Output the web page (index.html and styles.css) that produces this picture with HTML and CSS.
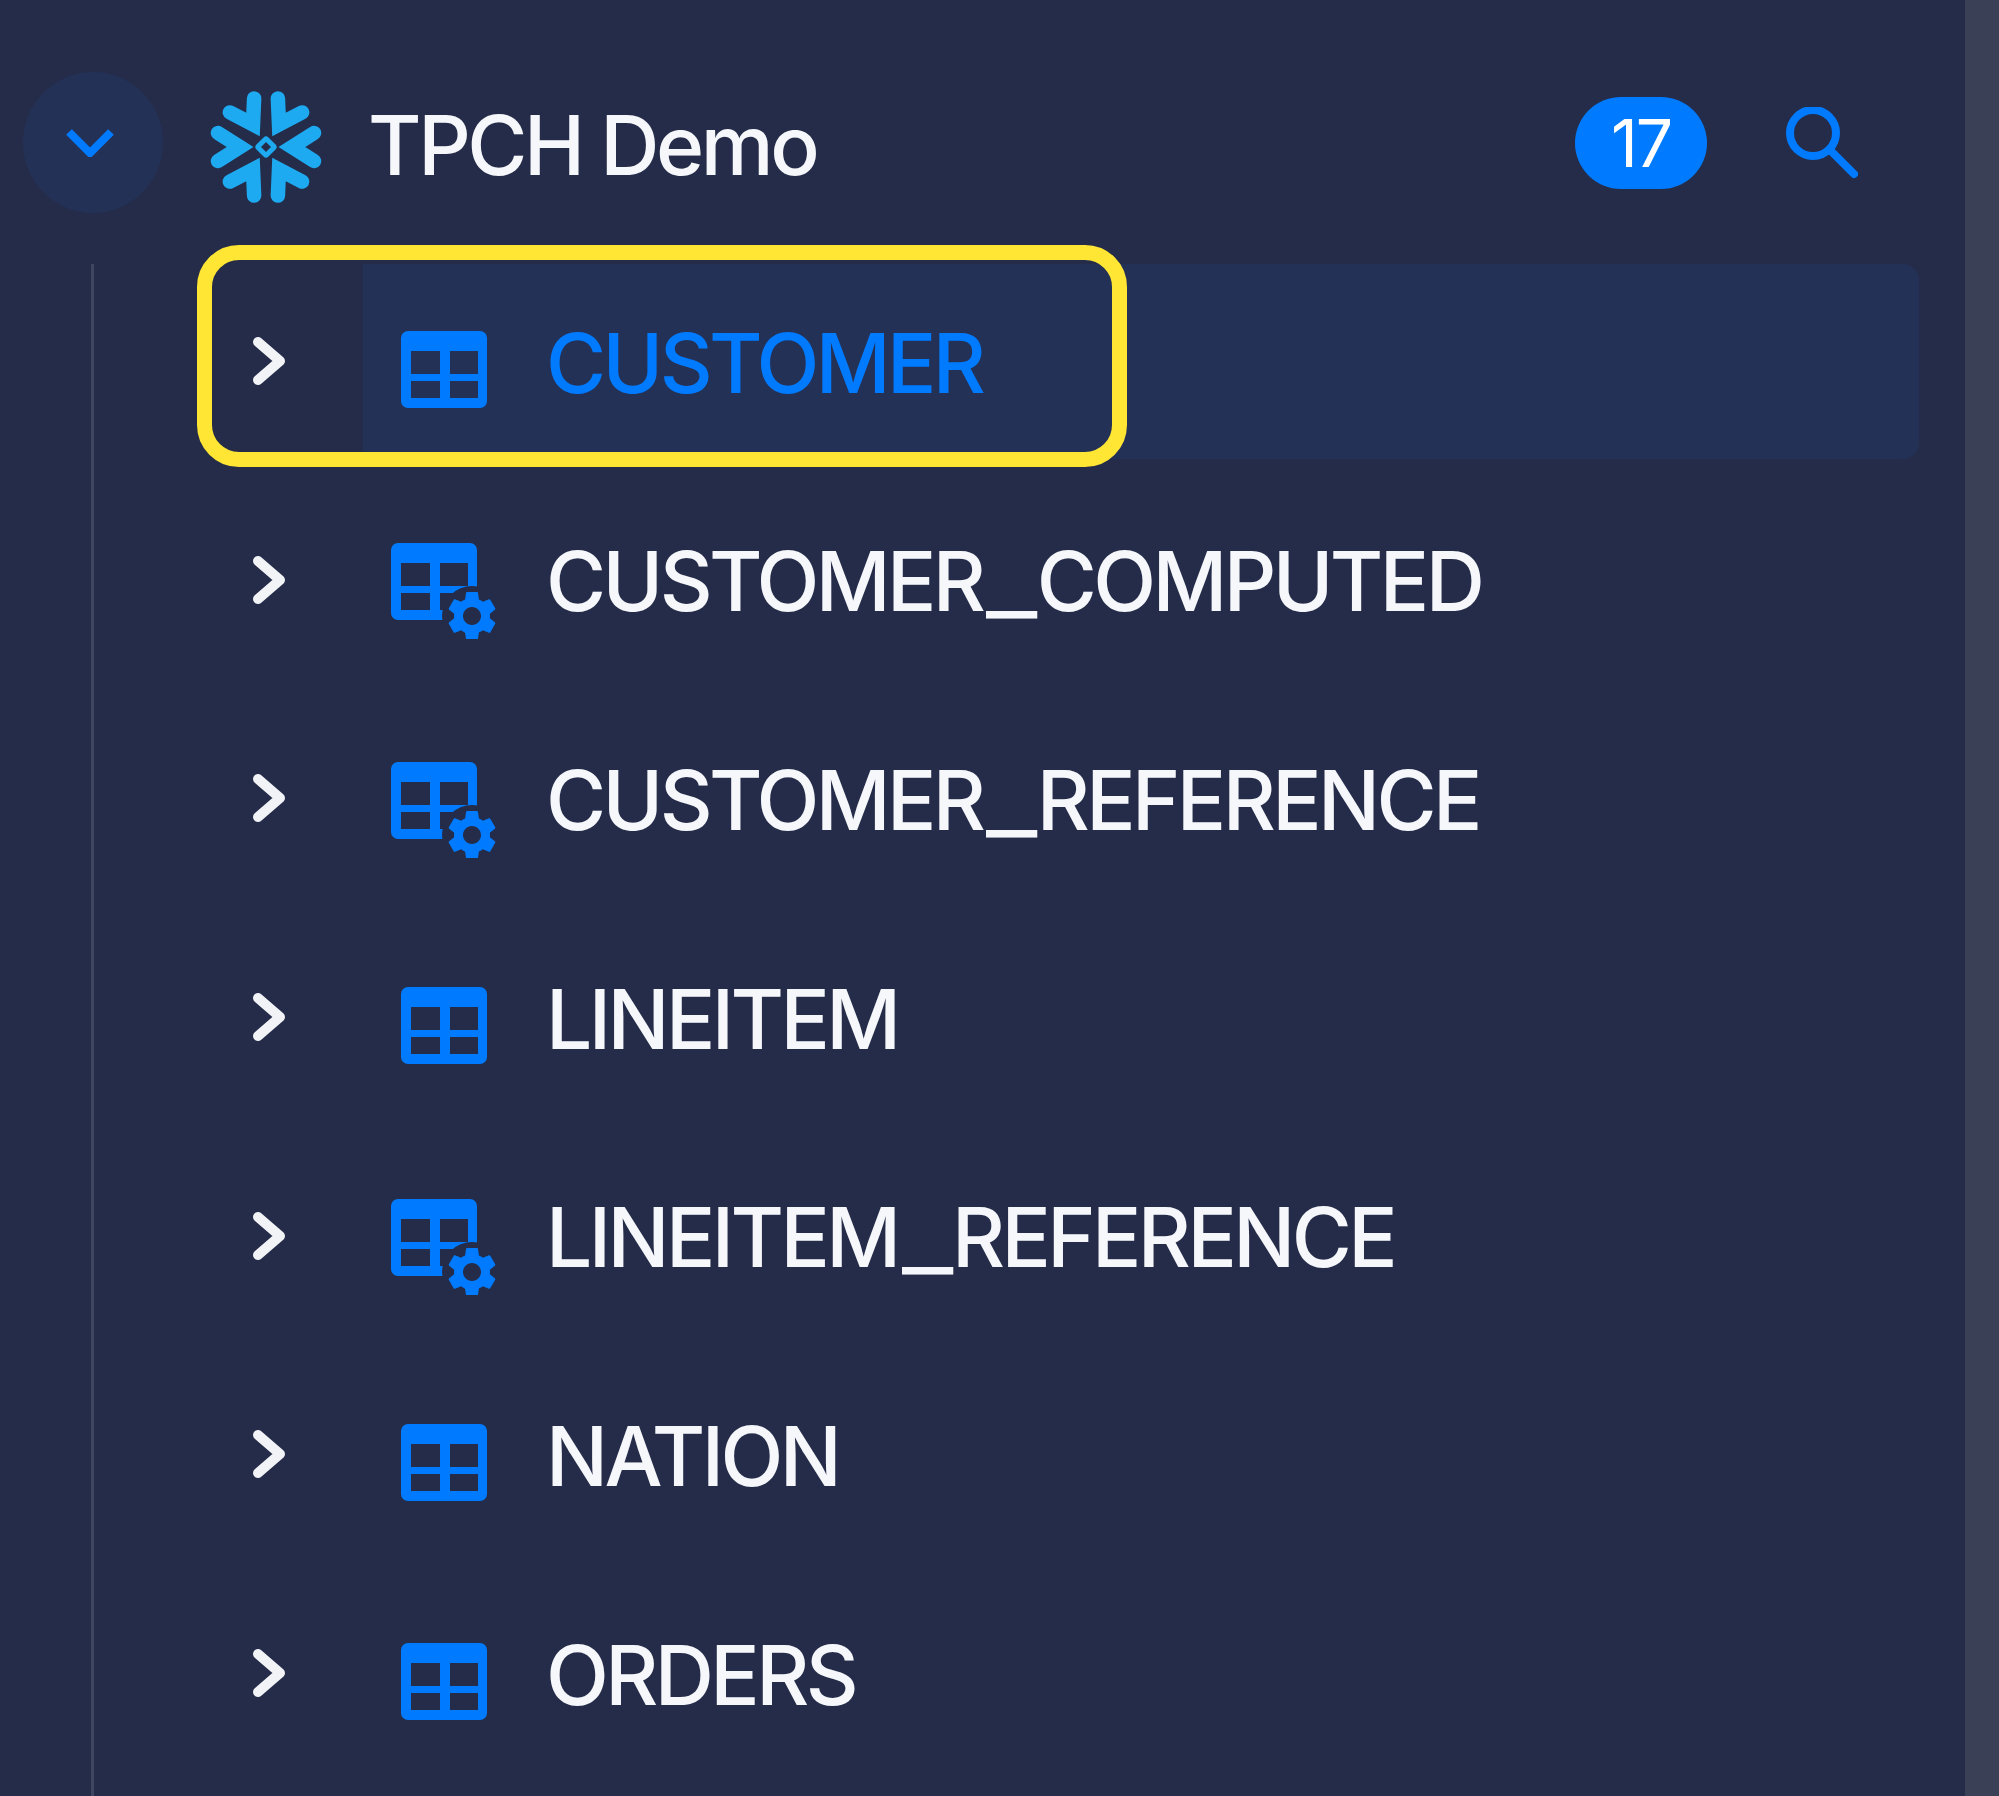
FILE: index.html
```html
<!DOCTYPE html>
<html lang="en">
<head>
    <meta charset="UTF-8">
    <title>TPCH Demo</title>
    <link rel="stylesheet" href="styles.css">
</head>
<body>
    <svg class="defs" width="0" height="0" aria-hidden="true">
        <defs>
            <path id="table-shape" fill-rule="evenodd" d="M7 0H79A7 7 0 0 1 86 7V70A7 7 0 0 1 79 77H7A7 7 0 0 1 0 70V7A7 7 0 0 1 7 0ZM10 20V43H39V20ZM49 20V43H77V20ZM10 50V67H39V50ZM49 50V67H77V50Z"/>
            <g id="table-gear">
                <use href="#table-shape"/>
                <circle class="gear-gap" cx="81" cy="73" r="30"/>
                <path transform="translate(51 43) scale(2.5)" d="M19.14 12.94c.04-.3.06-.61.06-.94 0-.32-.02-.64-.07-.94l2.03-1.58c.18-.14.23-.41.12-.61l-1.92-3.32c-.12-.22-.37-.29-.59-.22l-2.39.96c-.5-.38-1.03-.7-1.62-.94l-.36-2.54c-.04-.24-.24-.41-.48-.41h-3.84c-.24 0-.43.17-.47.41l-.36 2.54c-.59.24-1.13.57-1.62.94l-2.39-.96c-.22-.08-.47 0-.59.22L2.74 8.87c-.12.21-.08.47.12.61l2.03 1.58c-.05.3-.09.63-.09.94s.02.64.07.94l-2.03 1.58c-.18.14-.23.41-.12.61l1.92 3.32c.12.22.37.29.59.22l2.39-.96c.5.38 1.03.7 1.62.94l.36 2.54c.05.24.24.41.48.41h3.84c.24 0 .44-.17.47-.41l.36-2.54c.59-.24 1.13-.56 1.62-.94l2.39.96c.22.08.47 0 .59-.22l1.92-3.32c.12-.22.07-.47-.12-.61l-2.01-1.58zM12 15.6c-1.98 0-3.6-1.62-3.6-3.6s1.62-3.6 3.6-3.6 3.6 1.62 3.6 3.6-1.62 3.6-3.6 3.6z"/>
            </g>
            <polyline id="flake-arm" points="-48,-14 -26,0 -48,14"/>
            <polyline id="arrow" points="6,6 28,25 6,44"/>
        </defs>
    </svg>

    <div class="sidebar">
        <div class="header">
            <button class="collapse">
                <svg width="48" height="28" viewBox="0 0 48 28"><polyline points="3,3 24,24 45,3"/></svg>
            </button>
            <svg class="logo" width="112" height="116" viewBox="-56 -58 112 116">
                <use href="#flake-arm"/>
                <use href="#flake-arm" transform="rotate(60)"/>
                <use href="#flake-arm" transform="rotate(120)"/>
                <use href="#flake-arm" transform="rotate(180)"/>
                <use href="#flake-arm" transform="rotate(240)"/>
                <use href="#flake-arm" transform="rotate(300)"/>
                <rect class="logo-core" x="-6" y="-6" width="12" height="12" rx="1" transform="rotate(45)"/>
            </svg>
            <h1 class="title">TPCH Demo</h1>
            <span class="badge">17</span>
            <svg class="search" width="72" height="72" viewBox="0 0 72 72"><circle cx="27" cy="26" r="23"/><line x1="44" y1="43" x2="68" y2="67"/></svg>
        </div>

        <div class="tree">
            <div class="row active">
                <svg class="toggle" width="36" height="50" viewBox="0 0 36 50"><use href="#arrow"/></svg>
                <div class="row-body">
                    <svg class="icon" width="105" height="96" viewBox="0 0 105 96"><use href="#table-shape" x="10" y="6"/></svg>
                    <span class="name">CUSTOMER</span>
                </div>
            </div>
            <div class="row">
                <svg class="toggle" width="36" height="50" viewBox="0 0 36 50"><use href="#arrow"/></svg>
                <div class="row-body">
                    <svg class="icon" width="105" height="96" viewBox="0 0 105 96"><use href="#table-gear"/></svg>
                    <span class="name">CUSTOMER<span class="sep">_</span>COMPUTED</span>
                </div>
            </div>
            <div class="row">
                <svg class="toggle" width="36" height="50" viewBox="0 0 36 50"><use href="#arrow"/></svg>
                <div class="row-body">
                    <svg class="icon" width="105" height="96" viewBox="0 0 105 96"><use href="#table-gear"/></svg>
                    <span class="name">CUSTOMER<span class="sep">_</span>REFERENCE</span>
                </div>
            </div>
            <div class="row">
                <svg class="toggle" width="36" height="50" viewBox="0 0 36 50"><use href="#arrow"/></svg>
                <div class="row-body">
                    <svg class="icon" width="105" height="96" viewBox="0 0 105 96"><use href="#table-shape" x="10" y="6"/></svg>
                    <span class="name">LINEITEM</span>
                </div>
            </div>
            <div class="row">
                <svg class="toggle" width="36" height="50" viewBox="0 0 36 50"><use href="#arrow"/></svg>
                <div class="row-body">
                    <svg class="icon" width="105" height="96" viewBox="0 0 105 96"><use href="#table-gear"/></svg>
                    <span class="name">LINEITEM<span class="sep">_</span>REFERENCE</span>
                </div>
            </div>
            <div class="row">
                <svg class="toggle" width="36" height="50" viewBox="0 0 36 50"><use href="#arrow"/></svg>
                <div class="row-body">
                    <svg class="icon" width="105" height="96" viewBox="0 0 105 96"><use href="#table-shape" x="10" y="6"/></svg>
                    <span class="name">NATION</span>
                </div>
            </div>
            <div class="row">
                <svg class="toggle" width="36" height="50" viewBox="0 0 36 50"><use href="#arrow"/></svg>
                <div class="row-body">
                    <svg class="icon" width="105" height="96" viewBox="0 0 105 96"><use href="#table-shape" x="10" y="6"/></svg>
                    <span class="name">ORDERS</span>
                </div>
            </div>
        </div>

        <!-- yellow callout drawn over the first row -->
        <div class="callout"></div>
    </div>
    <div class="edge"></div>
</body>
</html>
```

FILE: styles.css
```css
html, body {
    height: 100%;
}
body {
    margin: 0;
    display: flex;
    overflow: hidden;
    background-color: #242c49;
    font-family: Inter, "Liberation Sans", sans-serif;
}
.defs {
    position: absolute;
}
.sidebar {
    position: relative;
    display: flex;
    flex-direction: column;
    width: 1965px;
    flex-shrink: 0;
}
.edge {
    flex-grow: 1;
    background-color: #3a4156;
}
.header {
    display: flex;
    align-items: center;
    flex-shrink: 0;
    box-sizing: border-box;
    height: 222px;
    padding: 72px 107px 0 23px;
    margin-bottom: 42px;
}
.collapse {
    align-self: flex-start;
    display: flex;
    align-items: center;
    justify-content: center;
    width: 140px;
    height: 141px;
    padding: 0 6px 0 0;
    border: none;
    border-radius: 50%;
    background-color: #243157;
}
.collapse svg {
    fill: none;
    stroke: #007bff;
    stroke-width: 8;
}
.logo {
    margin-left: 47px;
    fill: none;
    stroke: #1eaaf1;
    stroke-width: 14.5;
    stroke-linecap: round;
    stroke-linejoin: miter;
}
.logo-core {
    stroke-width: 5;
}
.title {
    margin: 0 0 4px 46px;
    font-size: 82px;
    font-weight: 550;
    letter-spacing: -3.4px;
    color: #f6f7fa;
}
.badge {
    margin: 0 0 9px auto;
    width: 132px;
    height: 92px;
    line-height: 92px;
    border-radius: 46px;
    text-align: center;
    font-size: 66px;
    letter-spacing: -2px;
    color: #fff;
    background-color: #007bff;
}
.search {
    margin: 0 0 9px 79px;
    fill: none;
    stroke: #007bff;
    stroke-width: 8;
    stroke-linecap: round;
}
.tree {
    flex-grow: 1;
    margin-left: 91px;
    border-left: 3px solid #3f4760;
}
.row {
    display: flex;
    align-items: stretch;
    height: 195px;
    margin-bottom: 23.7px;
}
.toggle {
    flex-shrink: 0;
    width: 36px;
    margin: 72px 75px 0 158px;
    fill: none;
    stroke: #f2f3f7;
    stroke-width: 10;
    stroke-linecap: round;
    stroke-linejoin: round;
}
.row-body {
    display: flex;
    align-items: center;
    flex-grow: 1;
    box-sizing: border-box;
    margin-right: 46px;
    padding-left: 28px;
    border-radius: 0 16px 16px 0;
}
.active .row-body {
    background-color: #243157;
}
.icon {
    flex-shrink: 0;
    margin-top: 22px;
    fill: #007bff;
}
.gear-gap {
    fill: #242c49;
}
.name {
    margin: 3px 0 0 50px;
    font-size: 82px;
    font-weight: 550;
    letter-spacing: -3.6px;
    color: #f6f7fa;
}
.sep {
    display: inline-block;
    margin: 0 10px;
    transform: scaleX(1.35);
}
.active .name {
    color: #007bff;
}
.callout {
    position: absolute;
    left: 197px;
    top: 245px;
    width: 930px;
    height: 222px;
    box-sizing: border-box;
    border: 15px solid #ffe534;
    border-radius: 42px;
}
```
